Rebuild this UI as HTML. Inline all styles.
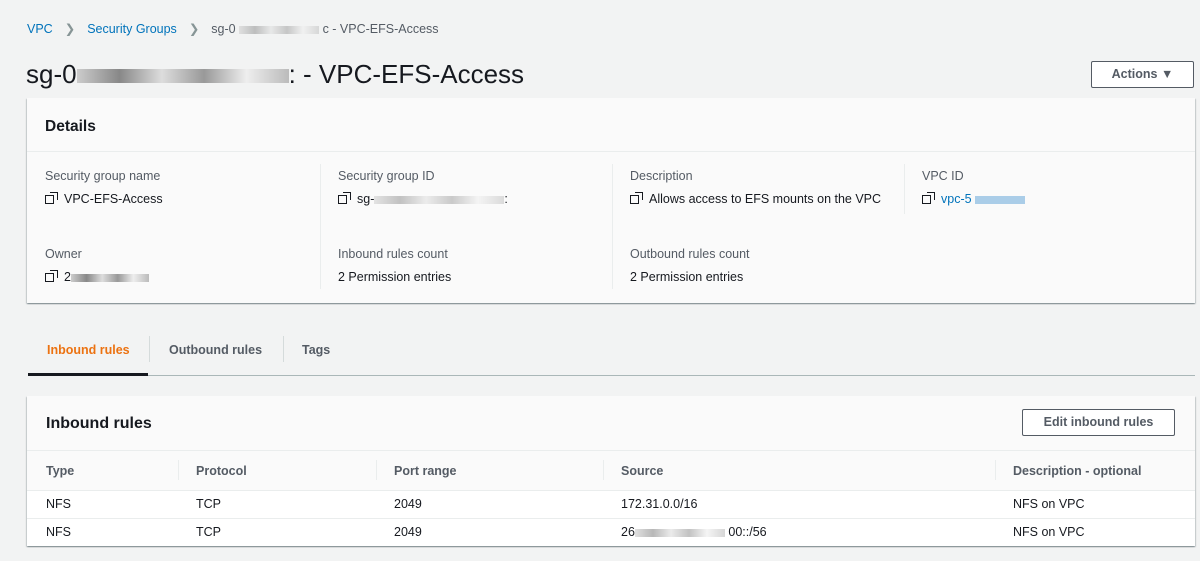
<!DOCTYPE html>
<html><head><style>
*{box-sizing:border-box;margin:0;padding:0}
body{width:1200px;height:561px;background:#f2f3f3;font-family:"Liberation Sans",sans-serif;color:#16191f;position:relative;overflow:hidden;font-size:12.5px}
.a{position:absolute;white-space:nowrap}
.lnk{color:#0073bb}
.lbl{color:#545b64;font-size:12.5px}
.card{position:absolute;background:#fafafa;box-shadow:0 1px 1px 0 rgba(0,28,36,.3),1px 1px 1px 0 rgba(0,28,36,.15),-1px 1px 1px 0 rgba(0,28,36,.15)}
.cp{display:inline-block;width:9px;height:9px;border:1.5px solid #16191f;margin-right:10px;position:relative;vertical-align:-1px}
.cp:before{content:"";position:absolute;right:-4.5px;top:-4.5px;width:7px;height:7px;border-right:1.5px solid #16191f;border-top:1.5px solid #16191f}
.blur{display:inline-block;height:8px;background:linear-gradient(90deg,#ccc,#888 20%,#ddd 40%,#999 60%,#eee 80%,#bbb);vertical-align:middle}
.vs{position:absolute;width:1px;background:#eaeded}
.btn{position:absolute;border:1px solid #545b64;border-radius:2px;background:#fff;font-weight:bold;color:#545b64;text-align:center;font-size:12.5px}
</style></head><body>
<div class="a" style="left:27px;top:21px"><span class="lnk">VPC</span><span style="color:#879596;margin:0 12px">&#x276F;</span><span class="lnk">Security Groups</span><span style="color:#879596;margin:0 12px">&#x276F;</span><span style="color:#545b64">sg-0 <span class="blur" style="width:80px;opacity:.5"></span> c - VPC-EFS-Access</span></div>
<div class="a" style="left:26px;top:59px;font-size:26px">sg-0<span class="blur" style="width:212px;height:14px"></span>: - VPC-EFS-Access</div>
<div class="btn" style="left:1091px;top:61px;width:103px;height:27px;line-height:25px;color:#545b64">Actions &#9660;</div>

<div class="card" style="left:27px;top:98px;width:1168px;height:205px">
<div class="a" style="left:18px;top:20px;font-size:15.5px;font-weight:bold">Details</div>
<div style="position:absolute;left:0;right:0;top:53px;border-top:1px solid #eaeded"></div>
<div class="vs" style="left:293px;top:66px;height:125px"></div>
<div class="vs" style="left:585px;top:66px;height:125px"></div>
<div class="vs" style="left:877px;top:66px;height:50px"></div>
<div class="a lbl" style="left:18px;top:71px">Security group name</div>
<div class="a" style="left:18px;top:94px"><span class="cp"></span>VPC-EFS-Access</div>
<div class="a lbl" style="left:311px;top:71px">Security group ID</div>
<div class="a" style="left:311px;top:94px"><span class="cp"></span>sg-<span class="blur" style="width:130px;opacity:.5"></span>:</div>
<div class="a lbl" style="left:603px;top:71px">Description</div>
<div class="a" style="left:603px;top:94px"><span class="cp"></span>Allows access to EFS mounts on the VPC</div>
<div class="a lbl" style="left:895px;top:71px">VPC ID</div>
<div class="a" style="left:895px;top:94px"><span class="cp"></span><span class="lnk">vpc-5</span> <span class="blur" style="width:50px;background:#aacde8"></span></div>
<div class="a lbl" style="left:18px;top:149px">Owner</div>
<div class="a" style="left:18px;top:172px"><span class="cp"></span>2<span class="blur" style="width:78px"></span></div>
<div class="a lbl" style="left:311px;top:149px">Inbound rules count</div>
<div class="a" style="left:311px;top:172px">2 Permission entries</div>
<div class="a lbl" style="left:603px;top:149px">Outbound rules count</div>
<div class="a" style="left:603px;top:172px">2 Permission entries</div>
</div>

<div style="position:absolute;left:28px;width:1167px;top:375px;border-top:1px solid #aab7b8"></div>
<div style="position:absolute;left:28px;width:120px;top:373px;height:3px;background:#16191f"></div>
<div class="a" style="left:47px;top:343px;font-weight:bold;color:#ec7211">Inbound rules</div>
<div class="vs" style="left:149px;top:336px;height:26px;background:#d5dbdb"></div>
<div class="a" style="left:169px;top:343px;font-weight:bold;color:#545b64">Outbound rules</div>
<div class="vs" style="left:283px;top:336px;height:26px;background:#d5dbdb"></div>
<div class="a" style="left:302px;top:343px;font-weight:bold;color:#545b64">Tags</div>

<div class="card" style="left:27px;top:396px;width:1168px;height:150px">
<div class="a" style="left:19px;top:19px;font-size:16px;font-weight:bold">Inbound rules</div>
<div class="btn" style="left:995px;top:13px;width:153px;height:27px;line-height:25px">Edit inbound rules</div>
<div style="position:absolute;left:0;right:0;top:54px;height:40px;border-top:1px solid #eaeded"></div>
<div class="vs" style="left:151px;top:64px;height:20px"></div>
<div class="vs" style="left:349px;top:64px;height:20px"></div>
<div class="vs" style="left:576px;top:64px;height:20px"></div>
<div class="vs" style="left:968px;top:64px;height:20px"></div>
<div class="a" style="left:19px;top:68px;font-weight:bold;color:#545b64">Type</div>
<div class="a" style="left:169px;top:68px;font-weight:bold;color:#545b64">Protocol</div>
<div class="a" style="left:367px;top:68px;font-weight:bold;color:#545b64">Port range</div>
<div class="a" style="left:594px;top:68px;font-weight:bold;color:#545b64">Source</div>
<div class="a" style="left:986px;top:68px;font-weight:bold;color:#545b64">Description - optional</div>
<div style="position:absolute;left:0;right:0;top:94px;height:56px;background:#fff;border-top:1px solid #eaeded"></div>
<div style="position:absolute;left:0;right:0;top:122px;border-top:1px solid #eaeded"></div>
<div class="a" style="left:19px;top:101px">NFS</div><div class="a" style="left:169px;top:101px">TCP</div><div class="a" style="left:367px;top:101px">2049</div><div class="a" style="left:594px;top:101px">172.31.0.0/16</div><div class="a" style="left:986px;top:101px">NFS on VPC</div>
<div class="a" style="left:19px;top:129px">NFS</div><div class="a" style="left:169px;top:129px">TCP</div><div class="a" style="left:367px;top:129px">2049</div><div class="a" style="left:594px;top:129px">26<span class="blur" style="width:90px;opacity:.6"></span> 00::/56</div><div class="a" style="left:986px;top:129px">NFS on VPC</div>
</div>
</body></html>
